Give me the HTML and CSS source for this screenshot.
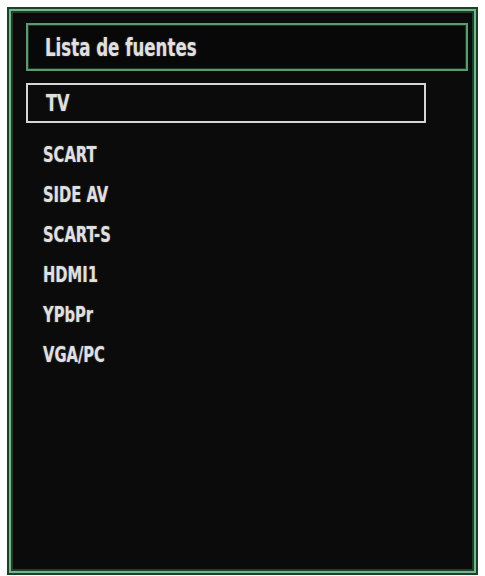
FILE: index.html
```html
<!DOCTYPE html>
<html lang="es">
<head>
<meta charset="utf-8">
<title>Lista de fuentes</title>
<link rel="stylesheet" href="styles.css">
</head>
<body>
  <div class="frame">
    <div class="header"><span class="label">Lista de fuentes</span></div>
    <ul class="sources">
      <li class="source selected"><span class="label">TV</span></li>
      <li class="source"><span class="label">SCART</span></li>
      <li class="source"><span class="label">SIDE AV</span></li>
      <li class="source"><span class="label">SCART-S</span></li>
      <li class="source"><span class="label">HDMI1</span></li>
      <li class="source"><span class="label">YPbPr</span></li>
      <li class="source"><span class="label">VGA/PC</span></li>
    </ul>
  </div>
</body>
</html>
```

FILE: styles.css
```css
html, body {
  margin: 0;
  padding: 0;
  background: #ffffff;
}

body {
  padding: 7px 7px 1px 7px;
  font-family: "DejaVu Sans Condensed", "DejaVu Sans", sans-serif;
  font-weight: bold;
  color: #e0e0e0;
}

/* outer panel: dark green / light green / dark green ring */
.frame {
  box-sizing: border-box;
  width: 471px;
  height: 568px;
  background: #0b0b0b;
  border: 2px solid #1a4029;
  box-shadow: inset 0 0 0 2px #78b48e, inset 0 0 0 4px #1c4029;
  padding: 14px 8px 0 17px;
  display: flex;
  flex-direction: column;
}

/* condensed TV-menu lettering */
.label {
  display: inline-block;
  transform: scaleX(0.78);
  transform-origin: left center;
  white-space: nowrap;
  text-shadow: 0 0 2px rgba(255, 255, 255, 0.35);
}

.header {
  box-sizing: border-box;
  height: 48px;
  border: 2px solid #5a9a6e;
  box-shadow: inset 0 0 0 1px #1b3624;
  background: #080808;
  padding-left: 17px;
  display: flex;
  align-items: center;
  font-size: 25px;
}

.header .label {
  transform: scaleX(0.74);
}

.sources {
  list-style: none;
  margin: 12px 0 0 0;
  padding: 0;
  display: flex;
  flex-direction: column;
}

.source {
  box-sizing: border-box;
  width: 400px;
  height: 40px;
  padding-left: 17px;
  display: flex;
  align-items: center;
  font-size: 21px;
}

.source.selected {
  border: 2px solid #d6d6d6;
  padding-left: 18px;
  margin-bottom: 12px;
  font-size: 23px;
}
```
